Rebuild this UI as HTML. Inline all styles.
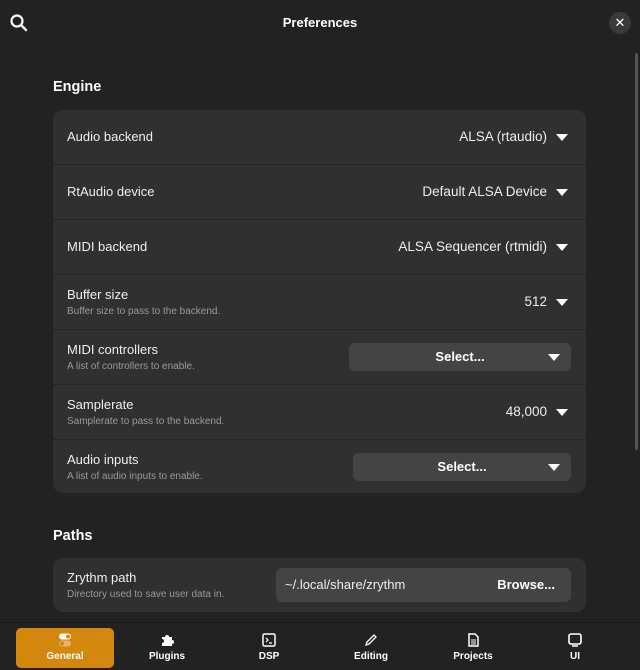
<!DOCTYPE html>
<html><head><style>
*{box-sizing:border-box;margin:0;padding:0}
body{width:640px;height:670px;background:#222;font-family:"Liberation Sans","DejaVu Sans",sans-serif;color:#fff;position:relative;overflow:hidden}
.title{position:absolute;top:15px;left:0;width:640px;text-align:center;font-weight:bold;font-size:13px}
.close{position:absolute;left:609px;top:12px;width:22px;height:22px;border-radius:50%;background:#3a3a3a;text-align:center;line-height:22px;font-weight:bold;font-size:13px}
h2{position:absolute;left:53px;font-size:14.5px;font-weight:bold}
.card{position:absolute;left:53px;width:533px;background:#303030;border-radius:10px}
.row{height:55px;border-bottom:1px solid #252525;position:relative}
.row:last-child{border-bottom:none}
.lbl{position:absolute;left:14px;top:19px;font-size:13px;color:#eee}
.lbl.two{top:12px}
.sub{display:block;font-size:10px;color:#999;margin-top:4px}
.val{position:absolute;right:39px;top:19px;font-size:13.5px;color:#eee}
.tri{position:absolute;right:18px;top:24px;width:0;height:0;border-left:6px solid transparent;border-right:6px solid transparent;border-top:7px solid #fff}
.btn{position:absolute;top:13px;height:28px;right:15px;background:#444;border-radius:6px;font-weight:bold;font-size:13px;text-align:center;line-height:28px}
.btn .tri{top:11px;right:11px}
.nav{position:absolute;top:622px;left:0;width:640px;height:48px;border-top:1px solid #1a1a1a;background:#222}
.tab{position:absolute;top:5px;width:98px;height:40px;border-radius:5px;text-align:center;font-size:10px;font-weight:bold}
.tab svg{display:block;margin:5px auto 4px}
.scroll{position:absolute;left:635px;top:53px;width:3px;height:397px;background:#555;border-radius:2px}
</style></head><body>
<svg style="position:absolute;left:9px;top:13px" width="20" height="20" viewBox="0 0 20 20"><circle cx="8" cy="8" r="5.5" fill="none" stroke="#fff" stroke-width="2.2"/><line x1="12" y1="12" x2="17" y2="17" stroke="#fff" stroke-width="2.4" stroke-linecap="round"/></svg>
<div class="title">Preferences</div>
<div class="close">✕</div>
<div class="scroll"></div>
<h2 style="top:79px">Engine</h2>
<div class="card" style="top:110px;height:383px">
<div class="row"><div class="lbl">Audio backend</div><div class="val">ALSA (rtaudio)</div><div class="tri"></div></div>
<div class="row"><div class="lbl">RtAudio device</div><div class="val">Default ALSA Device</div><div class="tri"></div></div>
<div class="row"><div class="lbl">MIDI backend</div><div class="val">ALSA Sequencer (rtmidi)</div><div class="tri"></div></div>
<div class="row"><div class="lbl two">Buffer size<span class="sub">Buffer size to pass to the backend.</span></div><div class="val">512</div><div class="tri"></div></div>
<div class="row"><div class="lbl two">MIDI controllers<span class="sub">A list of controllers to enable.</span></div><div class="btn" style="width:222px">Select...<div class="tri"></div></div></div>
<div class="row"><div class="lbl two">Samplerate<span class="sub">Samplerate to pass to the backend.</span></div><div class="val">48,000</div><div class="tri"></div></div>
<div class="row" style="height:53px"><div class="lbl two">Audio inputs<span class="sub">A list of audio inputs to enable.</span></div><div class="btn" style="width:218px">Select...<div class="tri"></div></div></div>
</div>
<h2 style="top:528px">Paths</h2>
<div class="card" style="top:558px;height:54px">
<div class="row" style="height:54px"><div class="lbl two">Zrythm path<span class="sub">Directory used to save user data in.</span></div>
<div style="position:absolute;left:223px;top:10px;width:295px;height:34px;background:#444;border-radius:6px;font-size:13px;line-height:34px;padding-left:9px;color:#eee">~/.local/share/zrythm<span style="position:absolute;right:16px;font-weight:bold;color:#fff">Browse...</span></div></div>
</div>
<div class="nav">
<div class="tab" style="left:16px;background:#d4870e"><svg width="14" height="14" viewBox="0 0 14 14"><rect x="1" y="0.5" width="12" height="6" rx="3" fill="#fff"/><circle cx="10" cy="3.5" r="2" fill="#d4870e"/><rect x="1" y="7.5" width="12" height="6" rx="3" fill="#eab262"/><circle cx="4" cy="10.5" r="2" fill="#d4870e"/></svg>General</div>
<div class="tab" style="left:118px"><svg width="14" height="14" viewBox="0 0 14 14"><path d="M2 4h3a2 2 0 1 1 4 0h3v3a2 2 0 1 1 0 4v2H2v-3a2 2 0 1 0 0-4z" fill="#fff"/></svg>Plugins</div>
<div class="tab" style="left:220px"><svg width="14" height="14" viewBox="0 0 14 14"><rect x="1" y="1" width="12" height="12" rx="1.5" fill="none" stroke="#fff" stroke-width="1.5"/><path d="M4 5l2 2-2 2M7 10h3" stroke="#fff" stroke-width="1.2" fill="none"/></svg>DSP</div>
<div class="tab" style="left:322px"><svg width="14" height="14" viewBox="0 0 14 14"><path d="M2 12l1-3 7-7 2 2-7 7z" fill="none" stroke="#fff" stroke-width="1.3"/></svg>Editing</div>
<div class="tab" style="left:424px"><svg width="14" height="14" viewBox="0 0 14 14"><path d="M3 1h6l3 3v9H3z" fill="none" stroke="#fff" stroke-width="1.5"/><path d="M5 7h5M5 9h5M5 11h5" stroke="#fff" stroke-width="1"/></svg>Projects</div>
<div class="tab" style="left:526px"><svg width="14" height="14" viewBox="0 0 14 14"><rect x="1" y="1" width="12" height="10" rx="2" fill="none" stroke="#fff" stroke-width="1.6"/><path d="M4 13h6" stroke="#fff" stroke-width="1.5"/></svg>UI</div>
</div>
</body></html>
